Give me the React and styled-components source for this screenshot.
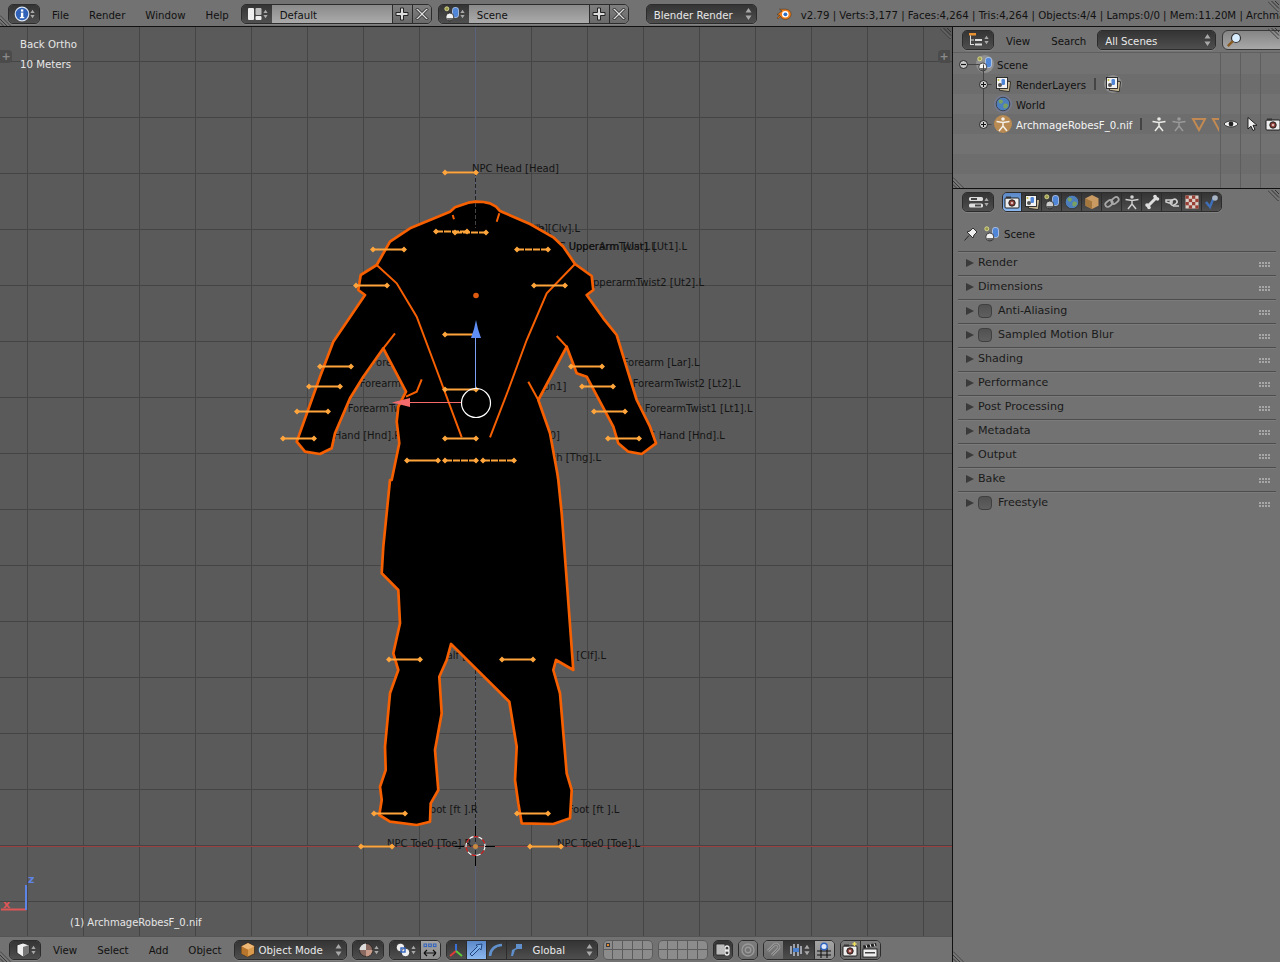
import React from "react";
import styled, { createGlobalStyle } from "styled-components";

const Global = createGlobalStyle`
  html, body { margin: 0; padding: 0; background: #727272; }
  body { font-family: "DejaVu Sans", sans-serif; font-size: 10.2px; color: #111; }
  * { box-sizing: border-box; }
`;

const Screen = styled.div`
  width: 1280px; height: 962px; overflow: hidden; display: flex; flex-direction: column;
  background: #727272; position: relative;
`;
const Header = styled.div`
  height: ${p => p.$h || 26}px; flex: none; display: flex; align-items: center; background: #727272;
  white-space: nowrap; overflow: hidden; position: relative; padding-top: ${p => p.$pt || 0}px;
  border-bottom: ${p => (p.$rule ? `1px solid ${p.$rule}` : "none")};
  border-top: ${p => (p.$top ? `1px solid ${p.$top}` : "none")};
`;
const Main = styled.div`
  flex: 1; min-height: 0; display: flex; border-top: 1px solid #111;
`;
const ViewColumn = styled.div`
  width: 952px; flex: none; display: flex; flex-direction: column;
`;
const Canvas = styled.div`
  flex: 1; position: relative; background: #5a5a5a; overflow: hidden;
`;
const SideColumn = styled.div`
  flex: 1; min-width: 0; display: flex; flex-direction: column; border-left: 1px solid #111;
`;
const Outliner = styled.div`
  height: 162px; flex: none; display: flex; flex-direction: column; position: relative;
  border-bottom: 1px solid #111;
`;
const TreeArea = styled.div`
  flex: 1; min-height: 0; position: relative; overflow: hidden; padding-top: 1px;
`;
const TreeRow = styled.div`
  height: 20px; display: flex; align-items: center; position: relative; padding-top: 2px;
  background: ${p => (p.$alt ? "#6d6d6d" : "#727272")};
  padding-left: ${p => p.$indent}px; color: ${p => p.$color || "#111"};
`;
const RowGap = styled.span`width: ${p => p.$w}px; flex: none;`;
const RowDivider = styled.span`
  width: 2px; height: 12px; background: #444; margin: -2px ${p => p.$after}px 0 ${p => p.$before}px; flex: none;
`;
const IconHalo = styled.span`
  width: 18px; height: 18px; border-radius: 50%; flex: none; display: flex; align-items: center; justify-content: center;
  margin-top: -2px;
  background: ${p => p.$bg || "rgba(200,200,200,.35)"}; margin-right: ${p => p.$mr ?? 4}px;
`;
const ColumnRule = styled.div`
  position: absolute; top: 0; bottom: 0; left: ${p => p.$x}px; width: 1px; background: #5e5e5e;
`;
const RowIcons = styled.div`
  display: flex; align-items: center; width: ${p => p.$w}px; overflow: hidden; gap: ${p => p.$gap || 4}px; flex: none; margin-top: -2px;
`;
const RestrictIcons = styled.div`
  position: absolute; left: 270px; top: 2px; display: flex; gap: 5px; align-items: center;
`;
const TreeLines = styled.svg`position: absolute; left: 0; top: 0; pointer-events: none;`;

const Properties = styled.div`flex: 1; min-height: 0; display: flex; flex-direction: column; position: relative;`;
const ContextRow = styled.div`
  height: 36px; flex: none; display: flex; align-items: center; padding: 2px 0 0 10px;
`;
const PanelList = styled.div`display: flex; flex-direction: column; padding: 0 4px 0 5px;`;
const PanelRow = styled.div`
  height: 24px; display: flex; align-items: center; padding: 0 0 2px 8px; position: relative;
  border-top: 1px solid #4d4d4d; box-shadow: inset 0 1px 0 #7c7c7c; color: #1a1a1a; font-size: 11.1px;
`;
const PanelCheck = styled.span`
  width: 14px; height: 14px; border-radius: 4px; background: linear-gradient(#515151, #5f5f5f);
  border: 1px solid #3f3f3f; margin-right: 6px; flex: none;
`;
const Tri = styled.span`
  width: 0; height: 0; border-left: 8px solid #3a3a3a; border-top: 4px solid transparent; border-bottom: 4px solid transparent;
  margin-right: 4px; flex: none;
`;
const Grip = styled.span`
  position: absolute; right: 5px; top: 10px; width: 12px; height: 5px;
  background-image: radial-gradient(circle at 1px 1px, #a6a6a6 0.8px, transparent 1px);
  background-size: 3px 3px;
`;

const MenuBar = styled.div`
  display: flex; gap: ${p => p.$gap || 20}px; margin-left: ${p => p.$ml}px; margin-right: ${p => p.$mr}px; color: #111;
`;
const MenuItem = styled.span`padding-top: 2px;`;
const Group = styled.div`
  display: flex; height: 20px; flex: none; margin-left: ${p => p.$ml || 0}px;
  border: 1px solid #2c2c2c; border-radius: 5px; overflow: hidden; box-shadow: 0 1px 0 rgba(255,255,255,.12);
  width: ${p => (p.$w ? `${p.$w}px` : "auto")};
`;
const Selector = styled.div`
  width: ${p => p.$w || 30}px; flex: none; display: flex; align-items: center; justify-content: space-between;
  padding: 0 4px 0 5px; background: linear-gradient(#343434, #4e4e4e);
`;
const Dropdown = styled.div`
  flex: 1; display: flex; align-items: center; justify-content: space-between; padding: 0 4px 0 ${p => p.$pl || 7}px;
  background: linear-gradient(#343434, #4e4e4e); color: #e8e8e8;
  width: ${p => (p.$w ? `${p.$w}px` : "auto")};
`;
const DropLabel = styled.span`display: flex; align-items: center; gap: 3px;`;
const DropText = styled.span`padding-top: 2px;`;
const Field = styled.div`
  width: ${p => p.$w}px; flex: none; display: flex; align-items: center; padding: 2px 0 0 8px; color: #111;
  background: linear-gradient(#8a8a8a, #ababab);
`;
const SquareBtn = styled.div`
  width: ${p => p.$w || 20}px; flex: none; display: flex; align-items: center; justify-content: center;
  background: ${p => (p.$on ? "linear-gradient(#5b88c8,#8cb8f0)" : p.$dark ? "linear-gradient(#343434,#4e4e4e)" : p.$light ? "linear-gradient(#a4a4a4,#8c8c8c)" : "linear-gradient(#7e7e7e,#6a6a6a)")};
  border-left: ${p => (p.$first ? "none" : "1px solid #2c2c2c")};
`;
const Stats = styled.span`margin-left: ${p => p.$ml}px; color: #111; padding-top: 2px;`;
const LogoBox = styled.span`margin-left: ${p => p.$ml}px; display: flex; flex: none;`;
const Layers = styled.div`
  display: grid; grid-template-columns: repeat(5, 1fr); grid-template-rows: 1fr 1fr;
  width: 50px; height: 20px; flex: none; margin-left: ${p => p.$ml}px;
  background: #5c5c5c; gap: 1px; border: 1px solid #5c5c5c; border-radius: 5px; overflow: hidden;
`;
const LayerCell = styled.span`
  background: #8c8c8c; display: flex; align-items: center; justify-content: center;
`;
const LayerDot = styled.span`width: 4px; height: 4px; background: #e88a2c; border: 1px solid #3a3a3a;`;

const ViewText = styled.div`
  position: absolute; left: ${p => p.$x}px; top: ${p => p.$y}px; color: #e6e6e6; white-space: nowrap; line-height: 14px;
  font-size: ${p => p.$size || 10.2}px;
`;
const AddTab = styled.div`
  position: absolute; top: 23px; ${p => (p.$right ? "right: 2px;" : "left: 0;")} width: 12px; height: 13px;
  background: #4b4b4b; border-radius: ${p => (p.$right ? "4px 0 0 4px" : "0 4px 4px 0")}; color: #8a8a8a;
  display: flex; align-items: center; justify-content: center; font-size: 11px; font-weight: bold; line-height: 1;
`;
const CornerMark = styled.svg`
  position: absolute; display: block;
  ${p => (p.$left !== undefined ? `left:${p.$left}px;` : "")}
  ${p => (p.$right !== undefined ? `right:${p.$right}px;` : "")}
  ${p => (p.$top !== undefined ? `top:${p.$top}px;` : "")}
  ${p => (p.$bottom !== undefined ? `bottom:${p.$bottom}px;` : "")}
`;
const SearchField = styled.div`
  flex: 1; height: 20px; margin-left: 6px; margin-right: -10px; border: 1px solid #3a3a3a; border-radius: 6px 0 0 6px;
  background: linear-gradient(#858585, #a8a8a8); display: flex; align-items: center; padding-left: 3px;
`;
const ViewSvg = styled.svg`display: block; position: absolute; left: 0; top: 0;`;
const BoneLabel = styled.text`font-family: "DejaVu Sans", sans-serif; font-size: 10px; fill: #141414;`;
const AxisLetter = styled.text`font-family: "DejaVu Sans", sans-serif; font-size: 11px; font-weight: bold;`;

/* ------ small drawings ------ */
const Arrows = ({ c = "#a8a8a8" }) => (
  <svg width="7" height="14" viewBox="0 0 7 14"><path d="M3.5 1 6.5 5.5h-6zM3.5 13 .5 8.5h6z" fill={c} /></svg>
);
const S = ({ children, w = 16 }) => <svg width={w} height={w} viewBox="0 0 16 16" style={{ flex: "none", display: "block" }}>{children}</svg>;
const Info = () => <S><circle cx="8" cy="8" r="6.8" fill="#2f62b8" stroke="#d9e4f5" strokeWidth="1.2" /><rect x="6.9" y="6.6" width="2.4" height="5" fill="#fff" /><rect x="5.9" y="11" width="4.4" height="1.2" fill="#fff" /><rect x="6.9" y="3.4" width="2.4" height="2.2" fill="#fff" /></S>;
const LayoutIco = () => <S><rect x="1" y="2" width="6" height="12" rx="1" fill="#eee" /><rect x="8.5" y="2" width="6" height="7" rx="1" fill="#bbb" /><rect x="8.5" y="10" width="6" height="4" rx="1" fill="#eee" /></S>;
const SceneIco = ({ dim }) => <S><rect x="8.5" y="1.5" width="6" height="10" rx="2.4" fill="#4f86d8" stroke="#c5d8f5" strokeWidth=".7" /><circle cx="2.8" cy="2.8" r="2" fill="#9a9a4a" stroke="#e8e8a0" strokeWidth=".8" /><circle cx="5.8" cy="11" r="4" fill={dim ? "#ccc" : "#f2f2f2"} stroke="#222" strokeWidth=".8" /><path d="M3 12a3 3 0 0 0 6 0z" fill="#222" opacity=".65" /></S>;
const PlusIco = () => <S w={16}><path d="M6.500 2h3v4.500H14v3H9.500V14h-3V9.500H2v-3h4.500z" fill="#ddd" stroke="#222" strokeWidth="1" /></S>;
const XIco = () => <S w={16}><path d="M3.500 2 8 6.500 12.500 2 14 3.500 9.500 8l4.500 4.500-1.500 1.500L8 9.500 3.500 14 2 12.500 6.500 8 2 3.500z" fill="#ddd" stroke="#222" strokeWidth="1" /></S>;
const BlenderLogo = () => <S><path d="M1 8.5 6 5 3.5 3.2h6c3.2 0 5.6 2.2 5.6 5s-2.5 5.2-5.6 5.2c-2.4 0-4.4-1.3-5-3.2L2.200 12.800 1 12l3-2.700z" fill="#ef7d1a" stroke="#3c2a14" strokeWidth=".5" /><circle cx="9.300" cy="8.200" r="3.300" fill="#fff" /><circle cx="9.400" cy="8.300" r="1.900" fill="#2e6fc4" /></S>;
const OutlinerIco = () => <S><rect x="1" y="1" width="7" height="2.500" fill="#e89030" /><path d="M2.500 3.500v9.500M2.500 8H6M2.500 12.500H6" stroke="#ddd" strokeWidth="1" fill="none" /><rect x="7" y="7" width="7" height="2" fill="#ddd" /><rect x="7" y="11.500" width="7" height="2" fill="#ddd" /></S>;
const PropsIco = () => <S><rect x="1" y="3" width="14" height="4" rx="1.500" fill="#ddd" /><rect x="1" y="9.500" width="14" height="4" rx="1.500" fill="#ddd" /><rect x="3" y="4" width="6" height="2" fill="#444" /><rect x="7" y="10.500" width="6" height="2" fill="#444" /></S>;
const Magnifier = () => <S><circle cx="10" cy="6" r="4.500" fill="#d8ecff" stroke="#333" strokeWidth="1.200" /><path d="M6.800 9.200 1.800 14.200" stroke="#8a5a20" strokeWidth="2.400" /></S>;
const RenderLayerIco = () => <S><rect x="5" y="5" width="10" height="10" fill="#c7b794" stroke="#222" strokeWidth=".8" transform="rotate(8 10 10)" /><rect x="1.500" y="1.500" width="11" height="11" fill="#f2f2f2" stroke="#222" strokeWidth=".9" /><rect x="6.500" y="3" width="3.500" height="6" rx="1.200" fill="#4f86d8" /><circle cx="5" cy="9" r="2" fill="#555" /><circle cx="3.500" cy="4" r="1" fill="#c8c040" /></S>;
const WorldIco = () => <S><circle cx="8" cy="8" r="6.800" fill="#4e7fbd" stroke="#333" strokeWidth=".8" /><path d="M4 4c2-1 4 0 4 1.500S6 8 5 7.500 3 5 4 4zM9 8c2-1 4 0 4 1.500S11 13 9.500 12.500 8 9 9 8z" fill="#7aa060" /></S>;
const ArmatureIco = ({ c = "#ecece8", w = 16 }) => <S w={w}><circle cx="8" cy="3" r="1.800" fill={c} /><path d="M1.500 5.500 8 6.500l6.500-1M8 6.500V10M8 10l-4 5M8 10l4 5" stroke={c} strokeWidth="1.500" fill="none" /></S>;
const MeshTri = ({ c = "#c28a52" }) => <S><path d="M2 3h12L8 14z" fill="none" stroke={c} strokeWidth="2" /></S>;
const Eye = () => <S><path d="M1 8c3-4 11-4 14 0-3 4-11 4-14 0z" fill="#f2f2f2" stroke="#222" strokeWidth=".8" /><circle cx="8" cy="8" r="2.400" fill="#222" /></S>;
const Cursor = () => <S><path d="M4 1.500v11.500l3-2.800 2 4.300 2-1-2-4.200h4z" fill="#f0f0f0" stroke="#111" strokeWidth=".9" /></S>;
const CameraIco = ({ add }) => <S><rect x="1" y="4" width="14" height="10" rx="1" fill="#eee" stroke="#111" strokeWidth=".9" /><rect x="2" y="2.500" width="5" height="2" fill="#333" /><circle cx="8" cy="9" r="3.200" fill="#8a3a34" stroke="#222" /><circle cx="8" cy="9" r="1.300" fill="#d9b6b0" />{add && <path d="M12.500 0v4M10.500 2h4" stroke="#f2e05c" strokeWidth="1.500" />}</S>;
const Clapper = () => <S><rect x="1" y="7" width="14" height="8" fill="#eee" stroke="#111" strokeWidth=".8" /><path d="M1 3.500 14 1l.6 3L1.600 6.500z" fill="#222" /><path d="M4 3l1 3M8 2l1 3M12 1.500l1 3" stroke="#eee" /><rect x="3" y="10" width="10" height="1.500" fill="#444" /></S>;
const Cube = () => <S><path d="M8 1l6.500 3.300v7.400L8 15l-6.500-3.300V4.300z" fill="#d99a4e" stroke="#3a2a14" strokeWidth=".8" /><path d="M8 7.500v7.500L1.500 11.700V4.300z" fill="#b8762c" /><path d="M8 7.500 14.500 4.300 8 1 1.500 4.300z" fill="#eeb877" /></S>;
const SolidCube = () => <S><path d="M2 3 8 1l6 2v8l-6 4-6-4z" fill="#efefef" stroke="#222" strokeWidth=".8" /><path d="M8 5v10l6-4V3z" fill="#777" /></S>;
const ShadeBall = () => <S><circle cx="8" cy="8" r="6.500" fill="#8a6a60" stroke="#222" strokeWidth=".8" /><path d="M8 1.500a6.500 6.500 0 0 0-6.500 6.500H8z" fill="#dcdcdc" /><path d="M8 8v6.500A6.500 6.500 0 0 0 14.500 8z" fill="#c89a8a" /></S>;
const PivotIco = () => <S><circle cx="5.500" cy="5.500" r="4.200" fill="#f0f0f0" stroke="#222" strokeWidth=".7" /><circle cx="10.500" cy="10.500" r="4.200" fill="#f0f0f0" stroke="#222" strokeWidth=".7" /><rect x="6" y="6" width="4" height="4" fill="none" stroke="#2f62c0" strokeWidth="1.400" /></S>;
const PivotAlign = () => <S><path d="M2 11h12M2 11l3-3M2 11l3 3M14 11l-3-3M14 11l-3 3" stroke="#111" strokeWidth="1.200" fill="none" /><g fill="none" stroke="#2f62c0"><rect x="2" y="2" width="2.600" height="2.600" /><rect x="6.700" y="2" width="2.600" height="2.600" /><rect x="11.400" y="2" width="2.600" height="2.600" /></g></S>;
const AxisIco = () => <S><path d="M8 9V2" stroke="#3a6fd8" strokeWidth="2" /><path d="M8 9 2 14" stroke="#e03a3a" strokeWidth="2" /><path d="M8 9l6 5" stroke="#5ecb3a" strokeWidth="2" /></S>;
const MoveIco = () => <S><path d="M14 2 8 3l1.500 1.500L2 12l2 2 7.500-7.500L13 8z" fill="#7db0ec" stroke="#23457c" strokeWidth="1" /></S>;
const RotIco = () => <S><path d="M2 14C2 8 7 3 14 3" fill="none" stroke="#5f90cc" strokeWidth="2.600" /></S>;
const ScaleIco = () => <S><path d="M8 2h6v5H9.500L7 8 5 14H3l1-6 4-2z" fill="#5f90cc" /></S>;
const LockLink = () => <S><rect x="1" y="2" width="9" height="11" rx="1" fill="#bbb" stroke="#222" strokeWidth=".8" /><rect x="10" y="4" width="4" height="5" rx="2" fill="none" stroke="#eee" strokeWidth="1.300" /><rect x="10" y="8" width="4" height="5" rx="2" fill="none" stroke="#eee" strokeWidth="1.300" /></S>;
const PropRing = () => <S><circle cx="8" cy="8" r="6" fill="none" stroke="#999" strokeWidth="1.400" /><circle cx="8" cy="8" r="2.800" fill="none" stroke="#999" strokeWidth="1.400" /></S>;
const Magnet = () => <S><path d="M3 9l6-6a2.800 2.800 0 0 1 4 4l-6 6" fill="none" stroke="#999" strokeWidth="3" /><path d="M3 9l6-6a2.800 2.800 0 0 1 4 4l-6 6" fill="none" stroke="#6f6f6f" strokeWidth="1" /></S>;
const SnapIncr = () => <S><path d="M3 4v8M13 4v8M6 2v12M10 2v12" stroke="#dfe8f5" strokeWidth="1.200" /><rect x="5" y="6" width="6" height="4" fill="#4a80d0" /></S>;
const SnapGrid = () => <S><path d="M5 6v10M11 6v10M1 9h14M1 13h14" stroke="#111" strokeWidth="1.100" /><circle cx="8" cy="4.500" r="3.200" fill="#dce8fa" stroke="#2f62c0" strokeWidth="1.400" /></S>;
const Pin = () => <S><path d="M1.500 14.500 6 9.500M4 6l6 6 1-3 3-3-4-4-3 3z" fill="#eee" stroke="#222" strokeWidth=".9" /></S>;

const tabIcons = [
  <CameraIco key="a" />,
  <RenderLayerIco key="b" />,
  <SceneIco key="c" dim />,
  <WorldIco key="d" />,
  <S key="e"><path d="M8 1l6.500 3.300v7.400L8 15l-6.500-3.300V4.300z" fill="#c99a62" /><path d="M8 7.500v7.500l-6.500-3.300V4.300z" fill="#a4773f" /></S>,
  <S key="f"><g fill="none" stroke="#a8a8a8" strokeWidth="1.800"><rect x="1" y="7" width="8" height="5" rx="2.500" transform="rotate(-40 5 9.500)" /><rect x="7" y="4" width="8" height="5" rx="2.500" transform="rotate(-40 11 6.500)" /></g></S>,
  <ArmatureIco key="g" c="#cfcfcf" />,
  <S key="h"><path d="M3 13 13 3" stroke="#ddd" strokeWidth="3" /><circle cx="3" cy="11" r="1.800" fill="#ddd" /><circle cx="5" cy="13.500" r="1.800" fill="#ddd" /><circle cx="11" cy="2.500" r="1.800" fill="#ddd" /><circle cx="13.500" cy="5" r="1.800" fill="#ddd" /></S>,
  <S key="i"><path d="M2 6h6v3H5l-3-1zM9 12H15" stroke="#cfcfcf" strokeWidth="1.500" fill="none" /><rect x="6" y="6" width="7" height="5" rx="2.500" fill="none" stroke="#cfcfcf" strokeWidth="1.600" transform="rotate(-30 9 8)" /></S>,
  <S key="j"><rect x="1.500" y="1.500" width="13" height="13" fill="#d9cfc6" /><g fill="#9a3f36"><rect x="1.500" y="1.500" width="3.300" height="3.300" /><rect x="8" y="1.500" width="3.300" height="3.300" /><rect x="4.800" y="4.800" width="3.300" height="3.300" /><rect x="11.300" y="4.800" width="3.300" height="3.300" /><rect x="1.500" y="8" width="3.300" height="3.300" /><rect x="8" y="8" width="3.300" height="3.300" /><rect x="4.800" y="11.300" width="3.300" height="3.300" /><rect x="11.300" y="11.300" width="3.300" height="3.300" /></g></S>,
  <S key="k"><path d="M2 8l4 5 4-10" fill="none" stroke="#3f6fb8" strokeWidth="2.400" /><circle cx="11" cy="4" r="2.800" fill="#a8b4c4" /></S>,
];

const Hatch = ({ flip, ...rest }) => (
  <CornerMark width="12" height="12" viewBox="0 0 12 12" {...rest}>
    {flip
      ? <path d="M0 1.500 10.500 12M3.500 1 11 8.500M7 1l4 4" stroke="#333" fill="none" />
      : <path d="M0 1.500 10.500 12M0 5 7 12M0 8.500 3.500 12" stroke="#3a3a3a" fill="none" />}
    {flip
      ? <path d="M1 1.500 10.500 11" stroke="#999" fill="none" opacity=".4" />
      : <path d="M0 2.500 9.500 12" stroke="#999" fill="none" opacity=".4" />}
  </CornerMark>
);

/* ------ viewport drawing ------ */
const z6 = (x, y) => [270 + x / 3, 150 + y / 3];
const z7 = (x, y) => [340 + x / 3, 480 + y / 3];
const toD = pts => "M" + pts.map(p => p.map(n => n.toFixed(1)).join(" ")).join("L");

const outline = [
  ...[[540,185],[555,172],[575,165],[595,158],[617,155],[640,156],[660,160],[678,170],[690,183],[780,222],[850,262],[880,290],[915,342],[965,378],[970,420],[950,435],[1000,505],[1040,555],[1060,620],[1100,750],[1140,830],[1158,880],[1115,912],[1075,905],[1045,880],[1030,830],[950,680],[920,670],[890,590],[805,750],[840,850],[862,970]].map(p => z6(...p)),
  ...[[655,0],[665,100],[680,300],[700,570],[648,540],[640,570],[660,640],[680,880],[695,930],[690,1015],[640,1032],[545,1030],[535,970],[525,900],[530,800],[508,665],[333,492],[320,540],[298,590],[305,700],[285,810],[295,930],[272,970],[270,1025],[230,1035],[150,1025],[118,1005],[125,960],[120,920],[137,870],[135,800],[150,640],[175,570],[160,520],[180,430],[175,330],[125,280],[130,200],[150,0]].map(p => z7(...p)),
  ...[[365,990],[388,880],[380,815],[385,770],[408,725],[340,595],[280,680],[240,745],[195,850],[185,895],[150,912],[105,905],[80,875],[150,680],[190,575],[285,435],[265,420],[272,375],[320,345],[360,275],[420,235],[540,185]].map(p => z6(...p)),
];
const strokes = [
  [[320,345],[380,400],[440,500],[500,660],[575,862]],
  [[915,342],[830,430],[770,570],[715,720],[660,862]],
  [[375,550],[340,595]],
  [[860,558],[890,590]],
  [[775,695],[805,750]],
  [[408,740],[440,725],[455,688]],
  [[548,195],[552,208]],
  [[688,190],[680,215]],
].map(s => toD(s.map(p => z6(...p))));

const bones = [
  [445, 172], [436, 231, 1], [455, 232, 1], [373, 249], [517, 249, 1], [356, 285], [534, 285],
  [445, 334], [320, 366], [571, 366], [309, 386], [582, 386], [297, 411], [594, 411], [283, 438], [608, 438],
  [445, 389], [445, 438], [407, 460], [445, 460, 1], [483, 460, 1],
  [389, 659], [502, 659], [374, 813], [517, 813], [361, 846], [530, 846],
];
const labels = [
  ["NPC Head [Head]", 472, 172],
  ["NPC Mouth [Mth]", 463, 232],
  ["NPC Clavicle [Clv].L", 482, 232],
  ["NPC UpperArm [Uar].L", 545, 250],
  ["NPC UpperarmTwist1 [Ut1].L", 545, 250],
  ["NPC UpperarmTwist2 [Ut2].L", 562, 286],
  ["NPC Forearm [Lar].L", 599, 366],
  ["NPC ForearmTwist2 [Lt2].L", 609, 387],
  ["NPC ForearmTwist1 [Lt1].L", 621, 412],
  ["NPC Hand [Hnd].L", 635, 439],
  ["NPC Thigh [Thg].L", 511, 461],
  ["NPC Calf [Clf].L", 530, 659],
  ["NPC Foot [ft ].L", 544, 813],
  ["NPC Toe0 [Toe].L", 557, 847],
  ["NPC Forearm [Lar].R", 347, 366],
  ["NPC ForearmTwist2 [Lt2].R", 336, 387],
  ["NPC ForearmTwist1 [Lt1].R", 324, 412],
  ["NPC Hand [Hnd].R", 310, 439],
  ["NPC Calf [Clf].R", 416, 659],
  ["NPC Foot [ft ].R", 401, 813],
  ["NPC Toe0 [Toe].R", 387, 847],
  ["NPC Spine1 [Spn1]", 472, 390],
  ["NPC Spine [Spn0]", 472, 439],
];

const vLines = Array.from({ length: 17 }, (_, i) => 27.5 + i * 56);
const hLines = Array.from({ length: 16 }, (_, i) => 61.5 + i * 56);

const ViewportDrawing = () => (
  <ViewSvg width="952" height="909" viewBox="0 27 952 909">
    {vLines.map(x => <line key={x} x1={x} x2={x} y1="27" y2="936" stroke="#454545" />)}
    {hLines.map(y => <line key={y} y1={y} y2={y} x1="0" x2="952" stroke="#454545" />)}
    <line x1="0" x2="952" y1="846.500" y2="846.500" stroke="#9c3f3f" />
    <line x1="475.500" x2="475.500" y1="27" y2="936" stroke="#59627a" />
    <line x1="475.500" x2="475.500" y1="172" y2="866" stroke="#222" strokeDasharray="4 2" />
    {labels.map(([t, x, y]) => <BoneLabel key={t} x={x} y={y}>{t}</BoneLabel>)}
    <path d={toD(outline) + "Z"} fill="#000" stroke="#f76000" strokeWidth="2.700" strokeLinejoin="round" />
    {strokes.map(d => <path key={d} d={d} fill="none" stroke="#f76000" strokeWidth="2" />)}
    <line x1="475.500" x2="475.500" y1="203" y2="228" stroke="#444" strokeDasharray="4 2" />
    {bones.map(([x, y, dash]) => (
      <g key={`${x}-${y}`}>
        <line x1={x} x2={x + 31} y1={y + 0.5} y2={y + 0.5} stroke="#ffa53c" strokeWidth="2" strokeDasharray={dash ? "7 1" : undefined} />
        <path d={`M${x - 3} ${y + .5}l3-3 3 3-3 3zM${x + 28} ${y + .5}l3-3 3 3-3 3z`} fill="#ffa53c" />
      </g>
    ))}
    <circle cx="476" cy="295.500" r="2.800" fill="#e05a10" />
    <line x1="475.500" x2="475.500" y1="337" y2="388" stroke="#7ba0f5" />
    <path d="M476 320 478 329 481 338h-10L474 329z" fill="#5f8ff5" />
    <line x1="410" x2="461" y1="402.500" y2="402.500" stroke="#f56a6a" />
    <path d="M392 402.500 410 398v9z" fill="#f56a6a" />
    <circle cx="476" cy="403" r="14.500" fill="none" stroke="#fff" strokeWidth="1.200" />
    <circle cx="475.500" cy="846" r="9.500" fill="none" stroke="#fff" strokeDasharray="4.500 5" strokeWidth="1.200" />
    <circle cx="475.500" cy="846" r="9.500" fill="none" stroke="#d81c1c" strokeDasharray="4.500 5" strokeDashoffset="4.800" strokeWidth="1.200" />
    <path d="M455 846.500h9M485 846.500h10M475.500 826v10M475.500 856v10" stroke="#000" />
    <circle cx="475.500" cy="846.500" r="2.500" fill="#c88a40" />
    <line x1="1" x2="26" y1="909.500" y2="909.500" stroke="#e05555" strokeWidth="2" />
    <line x1="26" x2="26" y1="885" y2="910" stroke="#5f84e8" strokeWidth="2" />
    <AxisLetter x="3" y="908" fill="#e05555">x</AxisLetter>
    <AxisLetter x="28" y="883" fill="#5f84e8">z</AxisLetter>
  </ViewSvg>
);

const Layer = ({ dot }) => (
  <Layers $ml={5}>
    {Array.from({ length: 10 }, (_, i) => <LayerCell key={i}>{dot && i === 0 && <LayerDot />}</LayerCell>)}
  </Layers>
);

const panels = [
  ["Render"], ["Dimensions"], ["Anti-Aliasing", 1], ["Sampled Motion Blur", 1], ["Shading"], ["Performance"],
  ["Post Processing"], ["Metadata"], ["Output"], ["Bake"], ["Freestyle", 1],
];

export default function App() {
  return (
    <Screen>
      <Global />
      <Header $pt={2}>
        <Group $ml={8}><Selector><Info /><Arrows /></Selector></Group>
        <MenuBar $ml={12} $mr={12}>
          {["File", "Render", "Window", "Help"].map(t => <MenuItem key={t}>{t}</MenuItem>)}
        </MenuBar>
        <Group>
          <Selector><LayoutIco /><Arrows /></Selector>
          <Field $w={120}>Default</Field>
          <SquareBtn><PlusIco /></SquareBtn>
          <SquareBtn $w={19}><XIco /></SquareBtn>
        </Group>
        <Group $ml={6}>
          <Selector><SceneIco /><Arrows /></Selector>
          <Field $w={120}>Scene</Field>
          <SquareBtn><PlusIco /></SquareBtn>
          <SquareBtn $w={19}><XIco /></SquareBtn>
        </Group>
        <Group $ml={17} $w={111}><Dropdown><DropText>Blender Render</DropText><Arrows /></Dropdown></Group>
        <LogoBox $ml={19}><BlenderLogo /></LogoBox>
        <Stats $ml={9}>v2.79 | Verts:3,177 | Faces:4,264 | Tris:4,264 | Objects:4/4 | Lamps:0/0 | Mem:11.20M | ArchmageRobesF_0.nif</Stats>
        <Hatch $left={0} $bottom={0} />
        <Hatch $right={0} $top={0} flip="1" />
      </Header>
      <Main>
        <ViewColumn>
          <Canvas>
            <ViewportDrawing />
            <ViewText $x={20} $y={11}>Back Ortho</ViewText>
            <ViewText $x={20} $y={31}>10 Meters</ViewText>
            <ViewText $x={70} $y={889} $size={10}>(1) ArchmageRobesF_0.nif</ViewText>
            <AddTab>+</AddTab>
            <AddTab $right>+</AddTab>
            <Hatch $right={0} $top={0} flip="1" />
          </Canvas>
          <Header $top="#555">
            <Group $ml={9}><Selector><SolidCube /><Arrows /></Selector></Group>
            <MenuBar $ml={12} $mr={12} $gap={20}>
              {["View", "Select", "Add", "Object"].map(t => <MenuItem key={t}>{t}</MenuItem>)}
            </MenuBar>
            <Group $w={113}><Dropdown $pl={5}><DropLabel><Cube /><DropText>Object Mode</DropText></DropLabel><Arrows /></Dropdown></Group>
            <Group $ml={5}><Selector><ShadeBall /><Arrows /></Selector></Group>
            <Group $ml={5}>
              <Selector><PivotIco /><Arrows /></Selector>
              <SquareBtn $light><PivotAlign /></SquareBtn>
            </Group>
            <Group $ml={5}>
              <SquareBtn $dark $first $w={19}><AxisIco /></SquareBtn>
              <SquareBtn $on><MoveIco /></SquareBtn>
              <SquareBtn $dark><RotIco /></SquareBtn>
              <SquareBtn $dark><ScaleIco /></SquareBtn>
              <Dropdown $w={71}><DropText>Global</DropText><Arrows /></Dropdown>
            </Group>
            <Layer dot />
            <Layer />
            <Group $ml={5}><SquareBtn $dark $first $w={18}><LockLink /></SquareBtn></Group>
            <Group $ml={5}><SquareBtn $first $w={18}><PropRing /></SquareBtn></Group>
            <Group $ml={5}>
              <SquareBtn $first $w={19}><Magnet /></SquareBtn>
              <Selector $w={31}><SnapIncr /><Arrows /></Selector>
              <SquareBtn $light><SnapGrid /></SquareBtn>
            </Group>
            <Group $ml={5}>
              <SquareBtn $first $w={19}><CameraIco add /></SquareBtn>
              <SquareBtn><Clapper /></SquareBtn>
            </Group>
            <Hatch $left={0} $bottom={0} />
          </Header>
        </ViewColumn>
        <SideColumn>
          <Outliner>
            <Header $rule="#5f5f5f" $pt={1}>
              <Group $ml={9}><Selector><OutlinerIco /><Arrows /></Selector></Group>
              <MenuBar $ml={12} $mr={11} $gap={21}>
                <MenuItem>View</MenuItem><MenuItem>Search</MenuItem>
              </MenuBar>
              <Group $w={119}><Dropdown><DropText>All Scenes</DropText><Arrows /></Dropdown></Group>
              <SearchField><Magnifier /></SearchField>
              <Hatch $right={0} $top={0} flip="1" />
            </Header>
            <TreeArea>
              <TreeRow $indent={23}><IconHalo $mr={3}><SceneIco /></IconHalo>Scene</TreeRow>
              <TreeRow $alt $indent={41}>
                <IconHalo $mr={4} $bg="transparent"><RenderLayerIco /></IconHalo>RenderLayers
                <RowDivider $before={8} $after={8} /><IconHalo $mr={0}><RenderLayerIco /></IconHalo>
              </TreeRow>
              <TreeRow $indent={41}><IconHalo $bg="rgba(120,130,170,.55)"><WorldIco /></IconHalo>World</TreeRow>
              <TreeRow $alt $indent={41} $color="#f4f4f4">
                <IconHalo $bg="#b98a52"><ArmatureIco c="#f2f0e8" /></IconHalo>ArchmageRobesF_0.nif
                <RowDivider $before={8} $after={9} />
                <RowIcons $w={68}>
                  <ArmatureIco /><ArmatureIco c="#9a9a9a" /><MeshTri /><MeshTri />
                </RowIcons>
                <RestrictIcons><Eye /><Cursor /><CameraIco /></RestrictIcons>
              </TreeRow>
              <TreeRow />
              <TreeRow $alt />
              <TreeRow />
              <TreeLines width="40" height="80">
                <path d="M10 11.500h16M30.500 11.500V71M30.500 31.500h8M30.500 71.500h8" stroke="#444" fill="none" />
                <circle cx="10.500" cy="11.500" r="4" fill="#ccc" stroke="#222" />
                <path d="M8 11.500h5" stroke="#111" strokeWidth="1.200" />
                <g fill="#ccc" stroke="#222"><circle cx="30.500" cy="31.500" r="4" /><circle cx="30.500" cy="71.500" r="4" /></g>
                <path d="M28 31.500h5M30.500 29v5M28 71.500h5M30.500 69v5" stroke="#111" />
              </TreeLines>
              <ColumnRule $x={267} /><ColumnRule $x={287} /><ColumnRule $x={307} />
              <Hatch $left={0} $bottom={0} />
            </TreeArea>
          </Outliner>
          <Properties>
            <Header>
              <Group $ml={9}><Selector><PropsIco /><Arrows /></Selector></Group>
              <Group $ml={8}>
                {tabIcons.map((ic, i) => <SquareBtn key={i} $w={i === 0 ? 18 : 20} $first={i === 0} $on={i === 0} $dark={i !== 0}>{ic}</SquareBtn>)}
              </Group>
              <Hatch $right={0} $top={0} flip="1" />
            </Header>
            <ContextRow>
              <Pin /><RowGap $w={5} /><SceneIco /><RowGap $w={4} />Scene
            </ContextRow>
            <PanelList>
              {panels.map(([t, chk]) => (
                <PanelRow key={t}><Tri />{chk && <PanelCheck />}{t}<Grip /></PanelRow>
              ))}
            </PanelList>
            <Hatch $left={0} $bottom={0} />
          </Properties>
        </SideColumn>
      </Main>
    </Screen>
  );
}
